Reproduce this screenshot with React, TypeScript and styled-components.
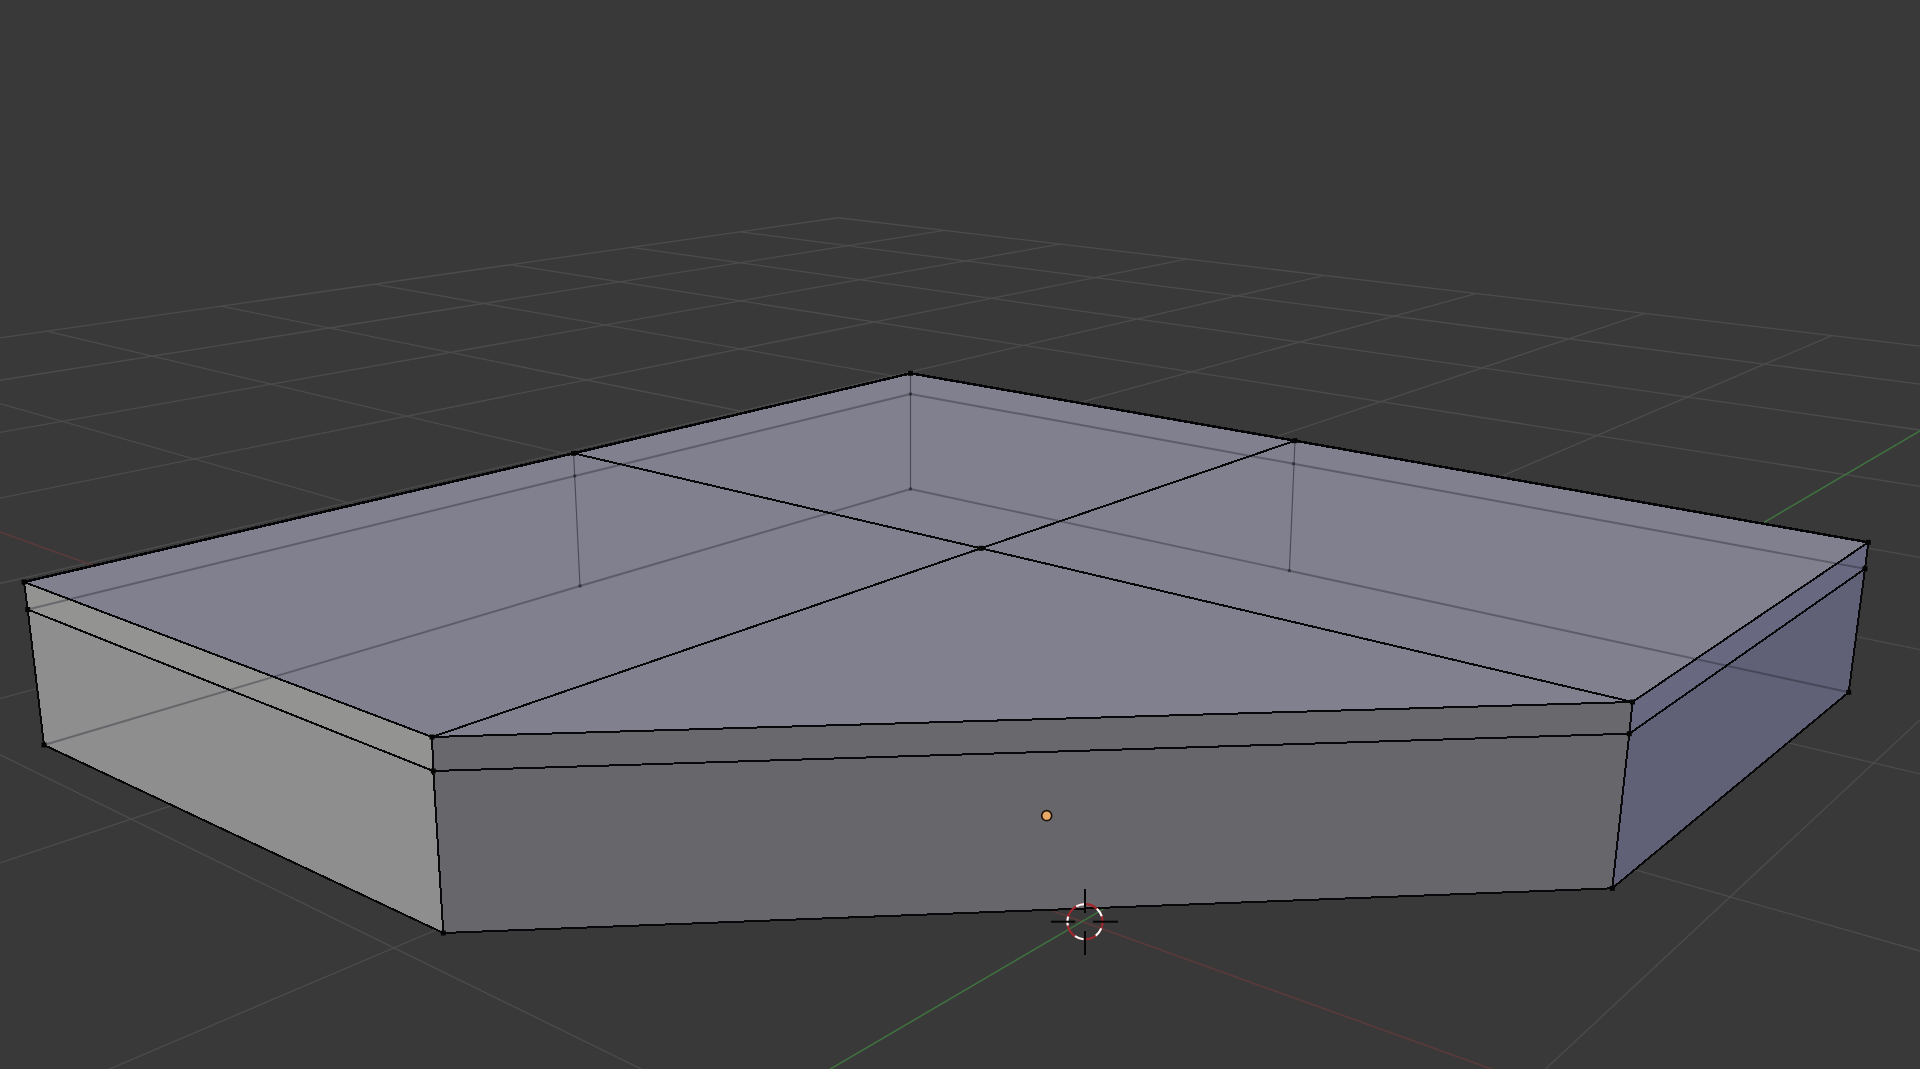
import React from "react";
import styled, { createGlobalStyle } from "styled-components";

const GlobalStyle = createGlobalStyle`
  html, body { margin: 0; padding: 0; height: 100%; background: #393939; overflow: hidden; }
  #root { height: 100%; }
`;

const Viewport = styled.main`
  width: 100%;
  height: 100vh;
  display: flex;
  background: #393939;
`;

const Scene = styled.svg`
  display: block;
  width: 1920px;
  height: 1069px;
  flex: none;
  filter: blur(0.35px);
`;

const GridLine = styled.line`
  stroke: #4c4c4c;
  stroke-width: 1.3;
`;

const AxisLine = styled.line<{ $axis: "x" | "y" }>`
  stroke: ${(p) => (p.$axis === "x" ? "#573a3a" : "#3f733f")};
  stroke-width: ${(p) => (p.$axis === "x" ? 1.9 : 1.5)};
`;

const tones = {
  top: "#80808e",
  leftBand: "#939392",
  left: "#8e8e8e",
  frontBand: "#69696d",
  front: "#67676b",
  rightBand: "#686880",
  right: "#606076",
};

const Face = styled.polygon<{ $tone: keyof typeof tones }>`
  fill: ${(p) => tones[p.$tone]};
`;

const Edge = styled.line`
  stroke: #08080a;
  stroke-width: 2;
  shape-rendering: crispEdges;
`;

const BackEdge = styled.line`
  stroke: #060608;
  stroke-width: 2.5;
  shape-rendering: crispEdges;
`;

const HiddenEdge = styled.line`
  stroke: rgba(20, 20, 30, 0.32);
  stroke-width: 1.9;
`;

const HiddenPost = styled.line`
  stroke: rgba(20, 20, 30, 0.5);
  stroke-width: 1.1;
`;

const Vertex = styled.rect`
  fill: #050505;
`;

const HiddenVertex = styled.rect`
  fill: rgba(20, 20, 30, 0.5);
`;

const OriginDot = styled.circle`
  fill: #e9a966;
  stroke: #1d130a;
  stroke-width: 1.7;
`;

const CursorRing = styled.circle<{ $dash?: boolean }>`
  fill: none;
  stroke: ${(p) => (p.$dash ? "#ffffff" : "#a3282e")};
  stroke-width: 2.1;
  ${(p) => (p.$dash ? "stroke-dasharray: 9 13.1; stroke-dashoffset: -6.9;" : "")}
`;

const CursorTick = styled.line`
  stroke: #050505;
  stroke-width: 2;
`;

type P = [number, number];

// Measured floor-grid crossings [i, j, x, y]; a homography is fitted through them.
const samples: number[][] = [
  [0, 0, 840, 217.5], [0, 0, 840, 217.5], [1, 0, 738, 231.7], [2, 0, 634, 247.3], [3, 0, 511, 265], [4, 0, 380, 285],
  [5, 0, 220, 306.7], [6, 0, 49, 331], [0, 1, 943, 230.5], [0, 2, 1058, 243.3], [0, 3, 1186.6, 259],
  [0, 4, 1324, 275.7], [0, 5, 1477.5, 294], [0, 6, 1646, 313.3], [0, 7, 1832.6, 335.7],
  [6, 1, 150, 356], [6, 2, 266, 384.3], [6, 3, 404, 416], [5, 1, 324.5, 327.7], [5, 2, 450, 352.3],
  [5, 3, 585, 380], [5, 4, 738, 410], [4, 1, 484, 303], [4, 2, 606, 325], [4, 3, 741, 348.3],
  [4, 4, 894, 376.7], [3, 1, 621.5, 281.7], [3, 2, 741, 300.7], [3, 3, 876, 322.3], [2, 1, 741, 262.7],
  [2, 2, 860, 280], [1, 1, 848, 245.7], [1, 2, 960, 261.7], [8, 8, 1084, 921], [8, 8, 1084, 921],
  [8, 8, 1084, 921], [9, 6, 131.6, 820], [9, 7, 398, 948], [7, 9, 1727.6, 896.7], [6, 9, 1874, 763],
  [9, 6, 131.6, 820], [9, 7, 398, 948], [7, 9, 1727.6, 896.7], [6, 9, 1874, 763],
];

function fitHomography(): number[] {
  const n = 8;
  const M = Array.from({ length: n }, () => new Array(n + 1).fill(0));
  const add = (row: number[], rhs: number) => {
    for (let r = 0; r < n; r++) {
      for (let c = 0; c < n; c++) M[r][c] += row[r] * row[c];
      M[r][n] += row[r] * rhs;
    }
  };
  for (const [i, j, x, y] of samples) {
    const u = x / 1000;
    const v = y / 1000;
    add([i, j, 1, 0, 0, 0, -u * i, -u * j], u);
    add([0, 0, 0, i, j, 1, -v * i, -v * j], v);
  }
  for (let c = 0; c < n; c++) {
    let best = c;
    for (let r = c + 1; r < n; r++) if (Math.abs(M[r][c]) > Math.abs(M[best][c])) best = r;
    [M[c], M[best]] = [M[best], M[c]];
    for (let r = 0; r < n; r++) {
      if (r === c) continue;
      const f = M[r][c] / M[c][c];
      for (let k = c; k <= n; k++) M[r][k] -= f * M[c][k];
    }
  }
  return M.map((row, k) => row[n] / M[k][k]);
}

const H = fitHomography();
const project = (i: number, j: number): P => {
  const w = H[6] * i + H[7] * j + 1;
  return [((H[0] * i + H[1] * j + H[2]) / w) * 1000, ((H[3] * i + H[4] * j + H[5]) / w) * 1000];
};
const depth = (i: number, j: number) => H[6] * i + H[7] * j + 1;

// Largest grid parameter on a line that is still safely in front of the camera.
function clipEnd(fn: (t: number) => number): number {
  let t = 16;
  while (t > 0 && fn(t) < 0.12) t -= 0.25;
  return t;
}

const gridSegments: [P, P][] = [];
for (let k = 0; k <= 16; k++) {
  if (k !== 8) {
    const end = clipEnd((t) => depth(k, t));
    gridSegments.push([project(k, 0), project(k, end)]);
    const end2 = clipEnd((t) => depth(t, k));
    gridSegments.push([project(0, k), project(end2, k)]);
  }
}

const xAxisEnd = clipEnd((t) => depth(8, t));
const yAxisEnd = clipEnd((t) => depth(t, 8));

const V = {
  backTop: [910.5, 373.3] as P,
  backMid: [910.5, 394] as P,
  backLow: [910.5, 489] as P,
  lTop: [24, 582] as P,
  lMid: [27.7, 609.5] as P,
  lLow: [44, 745] as P,
  flTop: [432, 737] as P,
  flMid: [433.3, 771] as P,
  flLow: [443.3, 933] as P,
  frTop: [1632.5, 702] as P,
  frMid: [1629.3, 733.7] as P,
  frLow: [1612.3, 888.3] as P,
  rTop: [1868.3, 542.3] as P,
  rMid: [1865, 568.7] as P,
  rLow: [1848.7, 692.3] as P,
  dTop: [573.6, 453.3] as P,
  dMid: [574.7, 476] as P,
  dLow: [580, 586] as P,
  eTop: [1295, 440.7] as P,
  eMid: [1293.4, 463.7] as P,
  eLow: [1289.4, 570.7] as P,
  center: [981, 548.3] as P,
};

const pts = (...list: P[]) => list.map((p) => p.join(",")).join(" ");

const backEdges: [P, P][] = [
  [V.lTop, V.dTop], [V.dTop, V.backTop], [V.backTop, V.eTop], [V.eTop, V.rTop],
];

const edges: [P, P][] = [
  [V.lTop, V.flTop], [V.flTop, V.frTop], [V.frTop, V.rTop],
  [V.dTop, V.center], [V.center, V.frTop], [V.eTop, V.center], [V.center, V.flTop],
  [V.lMid, V.flMid], [V.flMid, V.frMid], [V.frMid, V.rMid],
  [V.lLow, V.flLow], [V.flLow, V.frLow], [V.frLow, V.rLow],
  [V.lTop, V.lMid], [V.lMid, V.lLow], [V.flTop, V.flMid], [V.flMid, V.flLow],
  [V.frTop, V.frMid], [V.frMid, V.frLow], [V.rTop, V.rMid], [V.rMid, V.rLow],
];

const hiddenEdges: [P, P][] = [
  [V.lMid, V.dMid], [V.dMid, V.backMid], [V.backMid, V.eMid], [V.eMid, V.rMid],
  [V.lLow, V.dLow], [V.dLow, V.backLow], [V.backLow, V.eLow], [V.eLow, V.rLow],
];

const hiddenPosts: [P, P][] = [
  [V.backTop, V.backLow], [V.dTop, V.dLow], [V.eTop, V.eLow],
];

const visibleVerts: P[] = [
  V.backTop, V.lTop, V.lMid, V.lLow, V.flTop, V.flMid, V.flLow, V.frTop, V.frMid, V.frLow,
  V.rTop, V.rMid, V.rLow, V.dTop, V.eTop, V.center,
];
const hiddenVerts: P[] = [V.backMid, V.backLow, V.dMid, V.dLow, V.eMid, V.eLow];

const Seg = ({ a, b, as: C }: { a: P; b: P; as: React.ElementType }) => (
  <C x1={a[0]} y1={a[1]} x2={b[0]} y2={b[1]} />
);

export default function App() {
  const cx = 1085;
  const cy = 921.7;
  const [xa, xb] = [project(8, 0), project(8, xAxisEnd)];
  const [ya, yb] = [project(0, 8), project(yAxisEnd, 8)];
  return (
    <Viewport>
      <GlobalStyle />
      <Scene viewBox="0 0 1920 1069" xmlns="http://www.w3.org/2000/svg">
        {gridSegments.map(([a, b], k) => (
          <Seg key={k} a={a} b={b} as={GridLine} />
        ))}
        <AxisLine $axis="x" x1={xa[0]} y1={xa[1]} x2={xb[0]} y2={xb[1]} />
        <AxisLine $axis="y" x1={ya[0]} y1={ya[1]} x2={yb[0]} y2={yb[1]} />

        <Face $tone="top" points={pts(V.lTop, V.backTop, V.rTop, V.frTop, V.flTop)} />
        <Face $tone="leftBand" points={pts(V.lTop, V.flTop, V.flMid, V.lMid)} />
        <Face $tone="left" points={pts(V.lMid, V.flMid, V.flLow, V.lLow)} />
        <Face $tone="frontBand" points={pts(V.flTop, V.frTop, V.frMid, V.flMid)} />
        <Face $tone="front" points={pts(V.flMid, V.frMid, V.frLow, V.flLow)} />
        <Face $tone="rightBand" points={pts(V.frTop, V.rTop, V.rMid, V.frMid)} />
        <Face $tone="right" points={pts(V.frMid, V.rMid, V.rLow, V.frLow)} />

        {hiddenEdges.map(([a, b], k) => (
          <Seg key={k} a={a} b={b} as={HiddenEdge} />
        ))}
        {hiddenPosts.map(([a, b], k) => (
          <Seg key={k} a={a} b={b} as={HiddenPost} />
        ))}
        {hiddenVerts.map(([x, y], k) => (
          <HiddenVertex key={k} x={x - 1.5} y={y - 1.5} width={3} height={3} />
        ))}
        {edges.map(([a, b], k) => (
          <Seg key={k} a={a} b={b} as={Edge} />
        ))}
        {backEdges.map(([a, b], k) => (
          <Seg key={k} a={a} b={b} as={BackEdge} />
        ))}
        {visibleVerts.map(([x, y], k) => (
          <Vertex key={k} x={x - 2.5} y={y - 2.5} width={5} height={5} />
        ))}

        <OriginDot cx={1046.7} cy={815.7} r={5} />

        <CursorRing cx={cx} cy={cy} r={17.6} />
        <CursorRing $dash cx={cx} cy={cy} r={17.6} />
        <CursorTick x1={cx} y1={889} x2={cx} y2={913} />
        <CursorTick x1={cx} y1={931} x2={cx} y2={955} />
        <CursorTick x1={1051} y1={cy} x2={1075} y2={cy} />
        <CursorTick x1={1093} y1={cy} x2={1118} y2={cy} />
      </Scene>
    </Viewport>
  );
}
